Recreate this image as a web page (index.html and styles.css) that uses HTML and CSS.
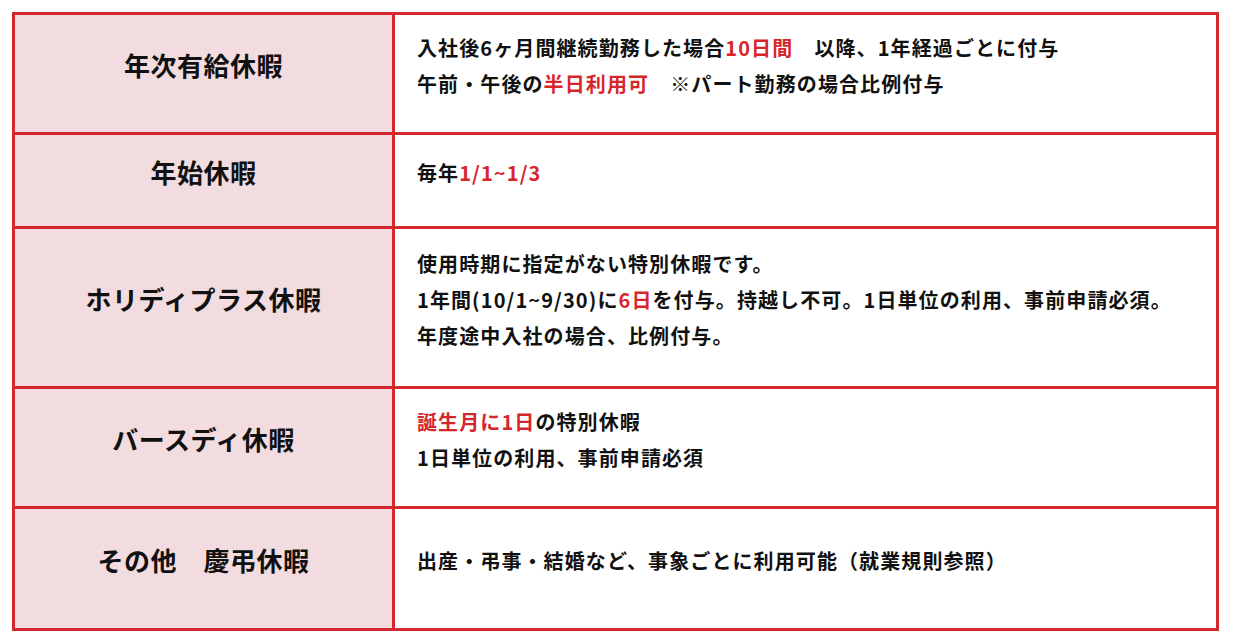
FILE: index.html
```html
<!DOCTYPE html>
<html lang="ja">
<head>
<meta charset="utf-8">
<title>休暇制度</title>
<link rel="stylesheet" href="styles.css">
</head>
<body>
<div class="leave-table">
  <div class="cell head"><p>年次有給休暇</p></div>
  <div class="cell body"><p>入社後6ヶ月間継続勤務した場合<span class="em">10日間</span>　以降、1年経過ごとに付与<br>午前・午後の<span class="em">半日利用可</span>　※パート勤務の場合比例付与</p></div>

  <div class="cell head"><p>年始休暇</p></div>
  <div class="cell body"><p>毎年<span class="em">1/1~1/3</span></p></div>

  <div class="cell head"><p>ホリディプラス休暇</p></div>
  <div class="cell body"><p>使用時期に指定がない特別休暇です。<br>1年間(10/1~9/30)に<span class="em">6日</span>を付与。持越し不可。1日単位の利用、事前申請必須。<br>年度途中入社の場合、比例付与。</p></div>

  <div class="cell head"><p>バースディ休暇</p></div>
  <div class="cell body"><p><span class="em">誕生月に1日</span>の特別休暇<br>1日単位の利用、事前申請必須</p></div>

  <div class="cell head"><p>その他　慶弔休暇</p></div>
  <div class="cell body"><p>出産・弔事・結婚など、事象ごとに利用可能（就業規則参照）</p></div>
</div>
</body>
</html>
```
FILE: styles.css
```css
html, body {
  margin: 0;
  padding: 0;
  background: #ffffff;
}
body {
  padding: 12px;
  font-family: "Noto Sans CJK JP", "Noto Sans", sans-serif;
  color: #111111;
}
.leave-table {
  width: 1207px;
  box-sizing: border-box;
  display: grid;
  grid-template-columns: 377px 821px;
  grid-template-rows: 117px 91px 157px 117px 119px;
  gap: 3px;
  padding: 3px;
  background: #d2282e;
}
.cell {
  display: flex;
  align-items: center;
  box-sizing: border-box;
}
.cell p {
  margin: 0;
}
.head {
  background: #f2dcdf;
  justify-content: center;
  padding-bottom: 18px;
  font-size: 26px;
  font-weight: 700;
  letter-spacing: 0.5px;
}
.body {
  background: #ffffff;
  padding-left: 22px;
  padding-bottom: 15px;
  font-size: 20px;
  font-weight: 700;
  line-height: 36px;
  letter-spacing: 1.1px;
}
.em {
  color: #d6262c;
}
```
